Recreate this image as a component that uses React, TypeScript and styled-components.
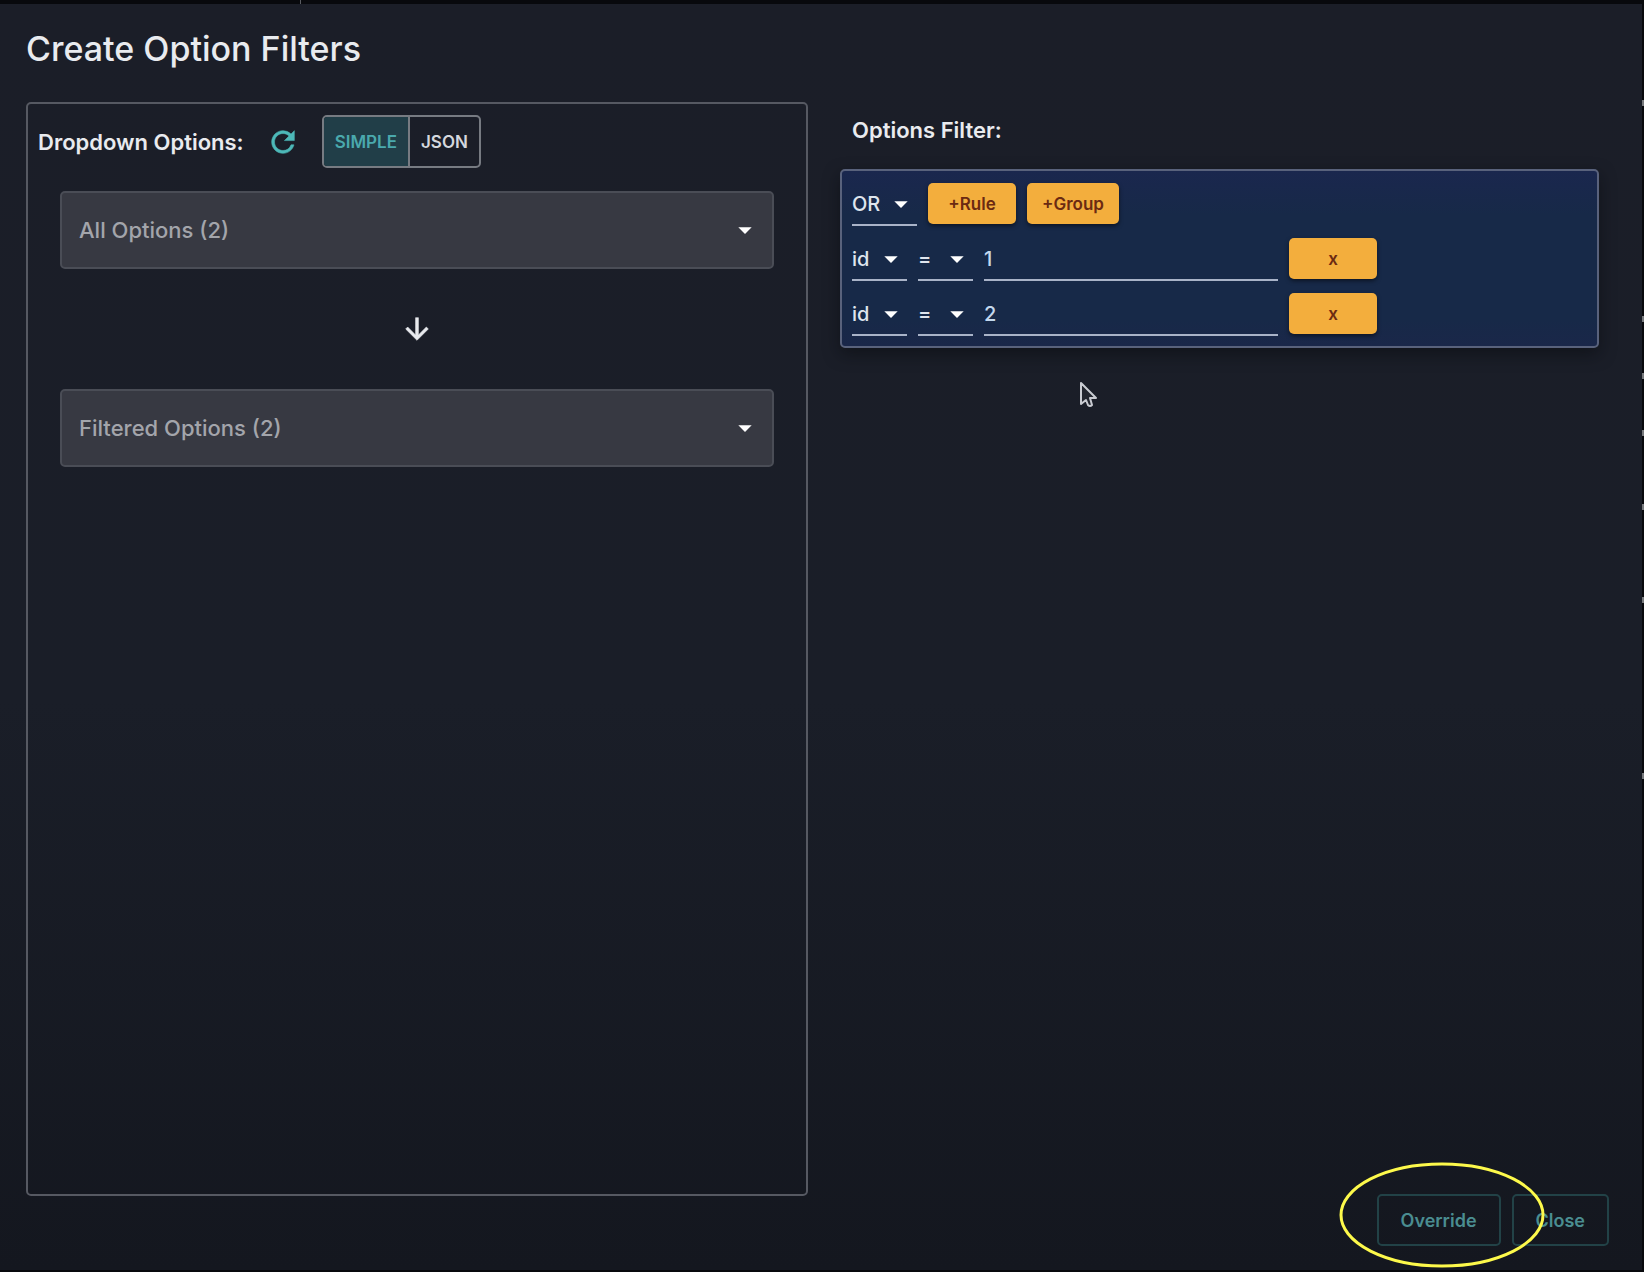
import React, { useState } from "react";
import styled, { createGlobalStyle } from "styled-components";

const GlobalStyle = createGlobalStyle`
  *, *::before, *::after { box-sizing: border-box; }
  body { margin: 0; background: #08090d; }
  body, button, input, select {
    font-family: Inter, "Liberation Sans", sans-serif;
  }
`;

// Slivers of the page behind the dialog that stay visible at its right edge.
const edgeMarks = [100, 316, 373, 430, 504, 597, 773]
  .map((y) => `linear-gradient(#77797c, #77797c) right ${y}px / 2px 6px no-repeat`)
  .join(", ");

const Backdrop = styled.div`
  display: flex;
  min-height: 100vh;
  padding: 4px 2px 2px 0;
  background:
    linear-gradient(#5a5c62, #5a5c62) 300px 0 / 1px 4px no-repeat,
    ${edgeMarks},
    #08090d;
`;

const Dialog = styled.main`
  flex: 1;
  display: flex;
  flex-direction: column;
  padding: 25px 33px 24px 26px;
  background: linear-gradient(#1b1e28, #1a1e28 55%, #14171f);
  color: #e9ebef;
`;

const Title = styled.h1`
  margin: 0 0 33px;
  font-size: 34px;
  line-height: 40px;
  font-weight: 500;
`;

const Columns = styled.div`
  flex: 1;
  display: grid;
  grid-template-columns: 782fr 759fr;
  gap: 32px;
  padding-right: 10px;
`;

const OptionsPanel = styled.section`
  padding: 11px 10px;
  border: 2px solid #565962;
  border-radius: 5px;
`;

const PanelHeader = styled.div`
  display: flex;
  align-items: center;
  height: 53px;
`;

const Heading = styled.h2`
  margin: 0;
  font-size: 22px;
  line-height: 28px;
  font-weight: 600;
`;

const IconButton = styled.button`
  display: flex;
  margin: 0 22px;
  padding: 0;
  border: 0;
  background: none;
  color: #4db8b8;
`;

const Toggle = styled.div`
  display: flex;
  height: 53px;
  border: 2px solid #777b82;
  border-radius: 5px;
  overflow: hidden;
`;

const ToggleButton = styled.button<{ $on: boolean }>`
  padding: 0 11px;
  border: 0;
  background: ${(p) => (p.$on ? "#213e48" : "transparent")};
  color: ${(p) => (p.$on ? "#4aa9ad" : "#d5d8de")};
  font-size: 17px;
  font-weight: 600;
  & + & { border-left: 2px solid #777b82; }
`;

const OptionsList = styled.div`
  display: flex;
  flex-direction: column;
  padding: 23px 22px 0;
`;

const Flow = styled.div`
  display: flex;
  align-items: center;
  justify-content: center;
  height: 120px;
`;

const SelectFrame = styled.div`
  display: grid;
  align-items: center;
  & > * { grid-area: 1 / 1; }
  & > svg { justify-self: end; pointer-events: none; color: #ffffff; }
`;

const FilledFrame = styled(SelectFrame)`
  height: 78px;
  padding-right: 11px;
  border: 2px solid #4a4d56;
  border-radius: 5px;
  background: #373942;
`;

const LineFrame = styled(SelectFrame)<{ $width: number }>`
  width: ${(p) => p.$width}px;
  height: 43px;
  border-bottom: 2px solid #a9b3c8;
`;

const PlainSelect = styled.select`
  appearance: none;
  width: 100%;
  height: 100%;
  padding: 0;
  border: 0;
  outline: 0;
  background: transparent;
  color: #dfe5ee;
  font-size: 20px;
  font-weight: 500;
`;

const FilledSelect = styled(PlainSelect)`
  padding-left: 17px;
  color: #a3a5ab;
  font-size: 22px;
`;

const FilterColumn = styled.section`
  padding-top: 14px;
`;

const FilterHeading = styled(Heading)`
  padding-left: 12px;
  margin-bottom: 25px;
`;

const Group = styled.div`
  display: flex;
  flex-direction: column;
  gap: 12px;
  padding: 12px 10px 10px;
  border: 2px solid #59627c;
  border-radius: 5px;
  background: linear-gradient(#1a274e, #172948 25%, #172948 85%, #1a2749);
  box-shadow: 0 6px 16px rgba(8, 9, 14, 0.5);
`;

const RuleRow = styled.div`
  display: flex;
  gap: 11px;
  height: 43px;
`;

const ValueInput = styled.input`
  width: 294px;
  height: 43px;
  padding: 0;
  border: 0;
  border-bottom: 2px solid #a9b3c8;
  outline: 0;
  background: transparent;
  color: #c3d8ee;
  font-size: 20px;
  font-weight: 500;
`;

const ActionButton = styled.button`
  min-width: 88px;
  height: 41px;
  padding: 0 15px;
  border: 0;
  border-radius: 5px;
  background: #f3ae3d;
  box-shadow: 0 2px 4px rgba(0, 0, 0, 0.5);
  color: #6b2a12;
  font-size: 17px;
  font-weight: 600;
`;

const Footer = styled.footer`
  display: flex;
  justify-content: flex-end;
  gap: 11px;
  margin-top: -2px;
`;

const OutlineButton = styled.button`
  height: 52px;
  padding: 0 22px;
  border: 2px solid #224247;
  border-radius: 5px;
  background: transparent;
  color: #4a8d91;
  font-size: 18px;
  font-weight: 600;
`;

const Marked = styled.div`
  position: relative;
`;

const Ring = styled.svg`
  position: absolute;
  left: -38px;
  top: -33px;
  z-index: 1;
  pointer-events: none;
`;

const Pointer = styled.svg`
  position: absolute;
  left: 1079px;
  top: 381px;
`;

function Caret() {
  return (
    <svg width="32" height="32" viewBox="0 0 24 24" aria-hidden="true">
      <path d="M7 10l5 5 5-5z" fill="currentColor" />
    </svg>
  );
}

function OptionsSelect({ label }: { label: string }) {
  return (
    <FilledFrame>
      <FilledSelect aria-label={label}>
        <option>{label}</option>
      </FilledSelect>
      <Caret />
    </FilledFrame>
  );
}

function LineSelect({ label, options, width }: { label: string; options: string[]; width: number }) {
  return (
    <LineFrame $width={width}>
      <PlainSelect aria-label={label}>
        {options.map((o) => (
          <option key={o}>{o}</option>
        ))}
      </PlainSelect>
      <Caret />
    </LineFrame>
  );
}

export default function App() {
  const [mode, setMode] = useState("SIMPLE");
  const [rules, setRules] = useState(["1", "2"]);

  return (
    <Backdrop>
      <GlobalStyle />
      <Dialog>
        <Title>Create Option Filters</Title>
        <Columns>
          <OptionsPanel>
            <PanelHeader>
              <Heading>Dropdown Options:</Heading>
              <IconButton aria-label="Refresh options">
                <svg width="34" height="34" viewBox="0 0 24 24">
                  <path
                    d="M17.65 6.35A7.958 7.958 0 0 0 12 4c-4.42 0-7.99 3.58-7.99 8s3.57 8 7.99 8c3.73 0 6.84-2.55 7.73-6h-2.08A5.99 5.99 0 0 1 12 18c-3.31 0-6-2.69-6-6s2.69-6 6-6c1.66 0 3.14.69 4.22 1.78L13 11h7V4l-2.35 2.35z"
                    fill="currentColor"
                    stroke="currentColor"
                    strokeWidth="0.4"
                  />
                </svg>
              </IconButton>
              <Toggle role="group" aria-label="Editor mode">
                {["SIMPLE", "JSON"].map((m) => (
                  <ToggleButton key={m} $on={mode === m} aria-pressed={mode === m} onClick={() => setMode(m)}>
                    {m}
                  </ToggleButton>
                ))}
              </Toggle>
            </PanelHeader>
            <OptionsList>
              <OptionsSelect label="All Options (2)" />
              <Flow>
                <svg width="34" height="34" viewBox="0 0 24 24" aria-hidden="true">
                  <path
                    d="M20 12l-1.41-1.41L13 16.17V4h-2v12.17l-5.58-5.59L4 12l8 8 8-8z"
                    fill="#e8eaee"
                    stroke="#e8eaee"
                    strokeWidth="0.4"
                  />
                </svg>
              </Flow>
              <OptionsSelect label="Filtered Options (2)" />
            </OptionsList>
          </OptionsPanel>

          <FilterColumn>
            <FilterHeading>Options Filter:</FilterHeading>
            <Group>
              <RuleRow>
                <LineSelect label="Combinator" options={["OR", "AND"]} width={65} />
                <ActionButton onClick={() => setRules([...rules, ""])}>+Rule</ActionButton>
                <ActionButton>+Group</ActionButton>
              </RuleRow>
              {rules.map((value, i) => (
                <RuleRow key={i}>
                  <LineSelect label="Field" options={["id"]} width={55} />
                  <LineSelect label="Operator" options={["=", "!="]} width={55} />
                  <ValueInput aria-label="Value" defaultValue={value} />
                  <ActionButton onClick={() => setRules(rules.slice(0, -1))}>x</ActionButton>
                </RuleRow>
              ))}
            </Group>
          </FilterColumn>
        </Columns>

        <Footer>
          <Marked>
            <OutlineButton>Override</OutlineButton>
            <Ring width="206" height="108" viewBox="0 0 206 108" aria-hidden="true">
              <ellipse cx="103" cy="54" rx="101" ry="51" fill="none" stroke="#fdf94b" strokeWidth="3" />
            </Ring>
          </Marked>
          <OutlineButton>Close</OutlineButton>
        </Footer>
      </Dialog>
      <Pointer width="19" height="28" viewBox="0 0 19 28" aria-hidden="true">
        <path
          d="M2 2v21l5-4 2 5q2 2 4 0l-2-7h6z"
          fill="#22252e"
          stroke="#c9cbd1"
          strokeWidth="2"
          strokeLinejoin="round"
        />
      </Pointer>
    </Backdrop>
  );
}
